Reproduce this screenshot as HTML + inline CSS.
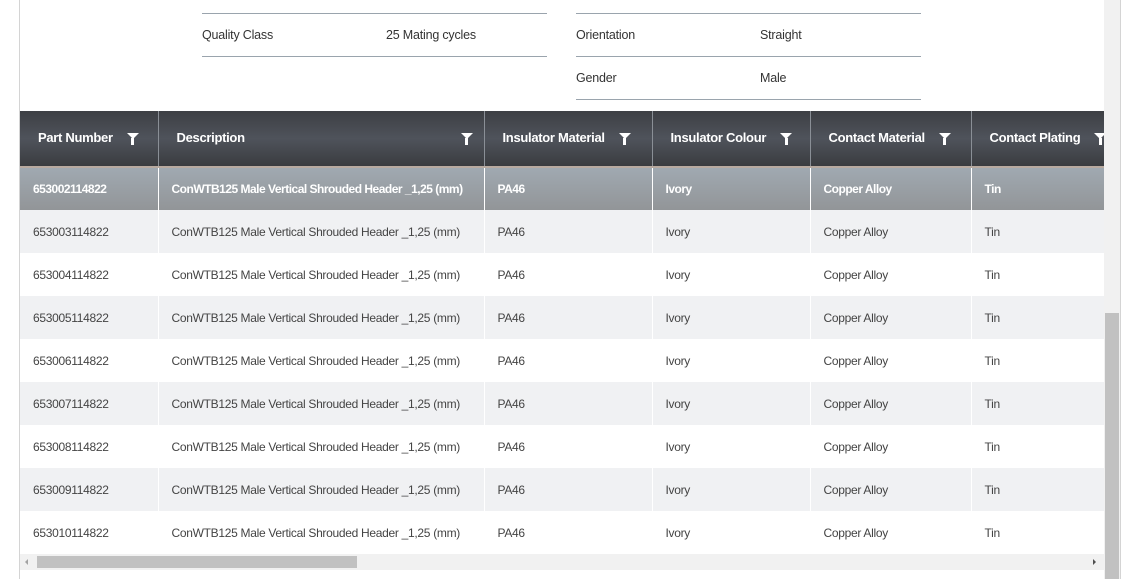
<!DOCTYPE html>
<html><head><style>
*{margin:0;padding:0;box-sizing:border-box}
body{width:1124px;height:579px;background:#fff;font-family:"Liberation Sans",sans-serif;position:relative;overflow:hidden;color:#333}
.vl{position:absolute;left:19px;top:0;width:1px;height:579px;background:#d4d4d4}
.rb{position:absolute;left:1120px;top:0;width:1px;height:579px;background:#d4d4d4}
.ln{position:absolute;height:1px;background:#9aa4ad}
.t{position:absolute;font-size:12.5px;color:#333;letter-spacing:-0.2px}
table{position:absolute;left:20px;top:111px;border-collapse:collapse;table-layout:fixed}
td,th{font-size:12px;letter-spacing:-0.3px;text-align:left;padding:0 0 0 13px;white-space:nowrap;overflow:hidden;border-left:1px solid #fff}
th{height:56px;color:#fff;font-weight:bold;font-size:13px;background:linear-gradient(#3d3f44,#4f535b 50%,#3a3c40);border-left:1px solid #8a8f96;border-bottom:2px solid #b8aaa0;padding-left:18px;padding-bottom:2px}
th:first-child,td:first-child{border-left:none}
td{height:43px;color:#444}
tr.sel td{background:linear-gradient(#a0a9b1,#929598);color:#fff;font-weight:bold;letter-spacing:-0.5px}
tr.a td{background:#fff}
tr.b td{background:#f0f1f3}
.f{display:inline-block;width:0;height:0;border-left:6px solid transparent;border-right:6px solid transparent;border-top:6px solid #fff;position:relative;top:-3px;margin-left:14px}
.f:after{content:"";position:absolute;left:-1.5px;top:-1px;width:3px;height:7px;background:#fff}
.hs{position:absolute;left:20px;top:554px;width:1084px;height:16px;background:#f1f1f1}
.vs{position:absolute;left:1104px;top:0;width:16px;height:579px;background:#f1f1f1}
</style></head><body>
<div class="vl"></div>
<div class="ln" style="left:202px;top:13px;width:345px"></div>
<div class="ln" style="left:202px;top:56px;width:345px"></div>
<div class="t" style="left:202px;top:28px">Quality Class</div>
<div class="t" style="left:386px;top:28px">25 Mating cycles</div>
<div class="ln" style="left:576px;top:13px;width:345px"></div>
<div class="ln" style="left:576px;top:56px;width:345px"></div>
<div class="ln" style="left:576px;top:99px;width:345px"></div>
<div class="t" style="left:576px;top:28px">Orientation</div>
<div class="t" style="left:760px;top:28px">Straight</div>
<div class="t" style="left:576px;top:71px">Gender</div>
<div class="t" style="left:760px;top:71px">Male</div>
<table>
<colgroup><col style="width:138px"><col style="width:326px"><col style="width:168px"><col style="width:158px"><col style="width:161px"><col style="width:140px"></colgroup>
<tr><th>Part Number<span class="f"></span></th><th>Description<span class="f" style="margin-left:216px"></span></th><th>Insulator Material<span class="f"></span></th><th>Insulator Colour<span class="f"></span></th><th>Contact Material<span class="f"></span></th><th>Contact Plating<span class="f"></span></th></tr>
<tr class="sel"><td>653002114822</td><td>ConWTB125 Male Vertical Shrouded Header _1,25 (mm)</td><td>PA46</td><td>Ivory</td><td>Copper Alloy</td><td>Tin</td></tr>
<tr class="b"><td>653003114822</td><td>ConWTB125 Male Vertical Shrouded Header _1,25 (mm)</td><td>PA46</td><td>Ivory</td><td>Copper Alloy</td><td>Tin</td></tr>
<tr class="a"><td>653004114822</td><td>ConWTB125 Male Vertical Shrouded Header _1,25 (mm)</td><td>PA46</td><td>Ivory</td><td>Copper Alloy</td><td>Tin</td></tr>
<tr class="b"><td>653005114822</td><td>ConWTB125 Male Vertical Shrouded Header _1,25 (mm)</td><td>PA46</td><td>Ivory</td><td>Copper Alloy</td><td>Tin</td></tr>
<tr class="a"><td>653006114822</td><td>ConWTB125 Male Vertical Shrouded Header _1,25 (mm)</td><td>PA46</td><td>Ivory</td><td>Copper Alloy</td><td>Tin</td></tr>
<tr class="b"><td>653007114822</td><td>ConWTB125 Male Vertical Shrouded Header _1,25 (mm)</td><td>PA46</td><td>Ivory</td><td>Copper Alloy</td><td>Tin</td></tr>
<tr class="a"><td>653008114822</td><td>ConWTB125 Male Vertical Shrouded Header _1,25 (mm)</td><td>PA46</td><td>Ivory</td><td>Copper Alloy</td><td>Tin</td></tr>
<tr class="b"><td>653009114822</td><td>ConWTB125 Male Vertical Shrouded Header _1,25 (mm)</td><td>PA46</td><td>Ivory</td><td>Copper Alloy</td><td>Tin</td></tr>
<tr class="a"><td>653010114822</td><td>ConWTB125 Male Vertical Shrouded Header _1,25 (mm)</td><td>PA46</td><td>Ivory</td><td>Copper Alloy</td><td>Tin</td></tr>
</table>
<div class="vs"><div style="position:absolute;left:1px;top:313px;width:14px;height:266px;background:#c1c1c1"></div></div>
<div class="hs">
<div style="position:absolute;left:5px;top:5px;border-right:3px solid #a3a3a3;border-top:3px solid transparent;border-bottom:3px solid transparent"></div>
<div style="position:absolute;left:17px;top:2px;width:320px;height:12px;background:#c1c1c1"></div>
<div style="position:absolute;left:1073px;top:5px;border-left:3px solid #505050;border-top:3px solid transparent;border-bottom:3px solid transparent"></div>
</div>
<div class="rb"></div>
</body></html>
